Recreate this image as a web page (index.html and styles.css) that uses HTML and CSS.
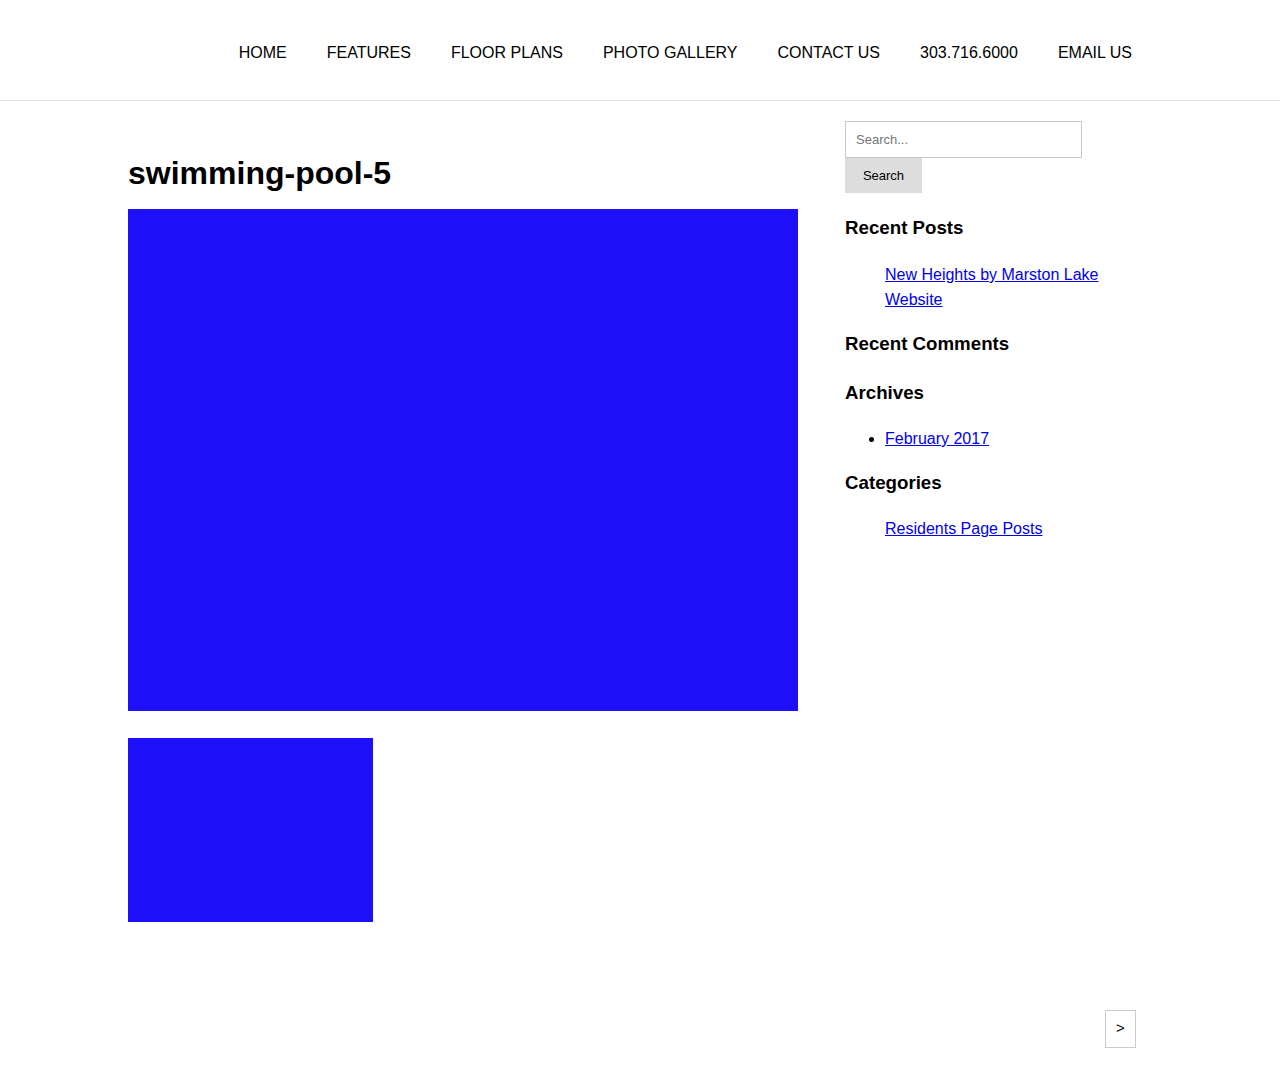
FILE: index.html
```html
<!DOCTYPE html>
<html lang="en">
<head>
<meta charset="utf-8">
<title>swimming-pool-5</title>
<link rel="stylesheet" href="styles.css">
</head>
<body>
<header class="site-header">
  <div class="container header-inner">
    <nav class="main-nav">
      <a href="#">HOME</a>
      <a href="#">FEATURES</a>
      <a href="#">FLOOR PLANS</a>
      <a href="#">PHOTO GALLERY</a>
      <a href="#">CONTACT US</a>
      <a href="#">303.716.6000</a>
      <a href="#">EMAIL US</a>
    </nav>
  </div>
</header>
<div class="container page">
  <main class="content">
    <h1 class="entry-title">swimming-pool-5</h1>
    <div class="hero-image"></div>
    <div class="thumb-image"></div>
  </main>
  <aside class="sidebar">
    <form class="search-form">
      <input class="search-field" type="search" placeholder="Search...">
      <button class="search-submit" type="button">Search</button>
    </form>
    <section class="widget">
      <h2 class="widget-title first">Recent Posts</h2>
      <ul class="widget-list plain first-list">
        <li><a href="#">New Heights by Marston Lake Website</a></li>
      </ul>
    </section>
    <section class="widget">
      <h2 class="widget-title">Recent Comments</h2>
      <ul class="widget-list empty"></ul>
    </section>
    <section class="widget">
      <h2 class="widget-title">Archives</h2>
      <ul class="widget-list bullets">
        <li><a href="#">February 2017</a></li>
      </ul>
    </section>
    <section class="widget">
      <h2 class="widget-title">Categories</h2>
      <ul class="widget-list plain">
        <li><a href="#">Residents Page Posts</a></li>
      </ul>
    </section>
  </aside>
</div>
<div class="container pager-row">
  <a class="pager-next" href="#">&gt;</a>
</div>
</body>
</html>
```
FILE: styles.css
```css
* { box-sizing: border-box; }
html, body { margin: 0; padding: 0; background: #fff; }
body {
  font-family: "Liberation Sans", Arial, sans-serif;
  color: #000;
  font-size: 16px;
}
.container {
  width: 1024px;
  margin: 0 auto;
}
.site-header {
  border-bottom: 1px solid #e2e2e2;
  height: 101px;
}
.header-inner {
  display: flex;
  justify-content: flex-end;
  padding-top: 44px;
}
.main-nav {
  display: flex;
}
.main-nav a {
  color: #000;
  text-decoration: none;
  font-size: 16px;
  line-height: 18px;
  padding: 0 20px;
}
.page {
  display: flex;
  gap: 47px;
  padding-top: 20px;
}
.content {
  width: 670px;
  flex: none;
}
.entry-title {
  font-size: 32px;
  line-height: 37px;
  font-weight: bold;
  margin: 34px 0 17px;
}
.hero-image {
  width: 670px;
  height: 502px;
  background: #1e0ff9;
}
.thumb-image {
  width: 245px;
  height: 184px;
  background: #1e0ff9;
  margin-top: 27px;
}
.sidebar {
  width: 291px;
  flex: none;
}
.search-form {
  display: flex;
  flex-direction: column;
  align-items: flex-start;
}
.search-field {
  width: 237px;
  height: 37px;
  border: 1px solid #c8c8c8;
  padding: 0 10px;
  font-family: "Liberation Sans", Arial, sans-serif;
  font-size: 13px;
  color: #000;
  margin: 0;
  outline: none;
  border-radius: 0;
}
.search-field::placeholder { color: #757575; }
.search-submit {
  width: 77px;
  height: 35px;
  border: none;
  background: #dddddd;
  font-family: "Liberation Sans", Arial, sans-serif;
  font-size: 13px;
  color: #000;
  margin: 0;
  padding: 0;
  border-radius: 0;
}
.widget-title {
  font-size: 18.72px;
  line-height: 21px;
  font-weight: bold;
  margin: 21px 0 0;
}
.widget-title.first { margin-top: 24px; }
.widget-list {
  margin: 23px 0 0;
  padding-left: 40px;
  font-size: 16px;
  line-height: 25px;
}
.widget-list.first-list { margin-top: 24px; }
.widget-list.plain { list-style: none; }
.widget-list.bullets { list-style: disc; }
.widget-list.empty { margin: 0; height: 7px; }
.widget-list a { color: #0000ee; text-decoration: underline; }
.pager-row {
  display: flex;
  justify-content: flex-end;
  padding-right: 16px;
  margin-top: 88px;
}
.pager-next {
  display: flex;
  align-items: center;
  justify-content: center;
  width: 31px;
  height: 38px;
  border: 1px solid #cccccc;
  padding-bottom: 4px;
  color: #000;
  text-decoration: none;
  font-size: 15px;
}
```
